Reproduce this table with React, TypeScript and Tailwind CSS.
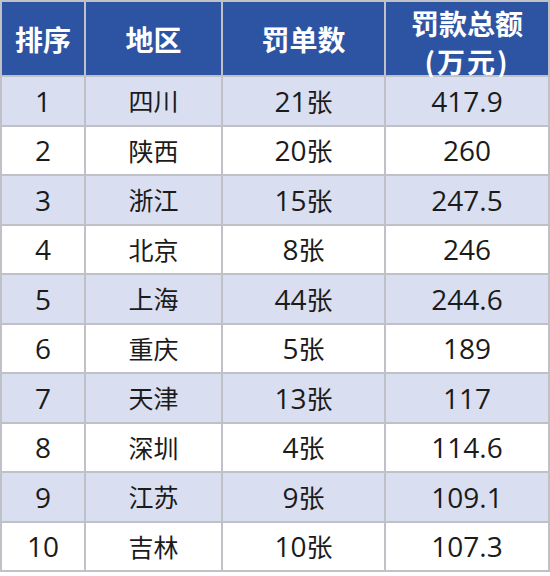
import React from "react";

const rows = [
  ["1", "四川", "21张", "417.9"],
  ["2", "陕西", "20张", "260"],
  ["3", "浙江", "15张", "247.5"],
  ["4", "北京", "8张", "246"],
  ["5", "上海", "44张", "244.6"],
  ["6", "重庆", "5张", "189"],
  ["7", "天津", "13张", "117"],
  ["8", "深圳", "4张", "114.6"],
  ["9", "江苏", "9张", "109.1"],
  ["10", "吉林", "10张", "107.3"],
];

function Cell({ text }: { text: string }) {
  const m = text.match(/^([0-9.]+)(.*)$/);
  if (m) {
    return (
      <>
        <span className="text-[28px]" style={{ fontFamily: '"Open Sans", "Noto Sans CJK SC", sans-serif' }}>{m[1]}</span>
        {m[2] && <span className="text-[26px]">{m[2]}</span>}
      </>
    );
  }
  return <span className="text-[25px]">{text}</span>;
}

export default function App() {
  return (
    <div className="w-[550px] h-[576px] bg-white" style={{ fontFamily: '"Noto Sans CJK SC", "Noto Sans", sans-serif' }}>
      <div className="grid grid-cols-[82px_135px_161px_162px] grid-rows-[73px_repeat(10,47.5px)] gap-[2px] p-[2px] bg-[#bfc1c6] w-[550px]">
        <div className="bg-[#2d54a3] text-white font-bold text-[28px] flex items-center justify-center">排序</div>
        <div className="bg-[#2d54a3] text-white font-bold text-[28px] flex items-center justify-center">地区</div>
        <div className="bg-[#2d54a3] text-white font-bold text-[28px] flex items-center justify-center">罚单数</div>
        <div className="bg-[#2d54a3] text-white font-bold text-[28px] leading-[38px] flex flex-col items-center justify-center pt-[6px]">
          <span>罚款总额</span>
          <span className="tracking-[2px]">(万元)</span>
        </div>
        {rows.map((r, i) => {
          const bg = i % 2 === 0 ? "bg-[#d9dff1]" : "bg-white";
          return (
            <React.Fragment key={i}>
              {r.map((c, j) => (
                <div key={j} className={`${bg} text-[#1b1b1b] flex items-center justify-center leading-none`}>
                  <Cell text={c} />
                </div>
              ))}
            </React.Fragment>
          );
        })}
      </div>
    </div>
  );
}
